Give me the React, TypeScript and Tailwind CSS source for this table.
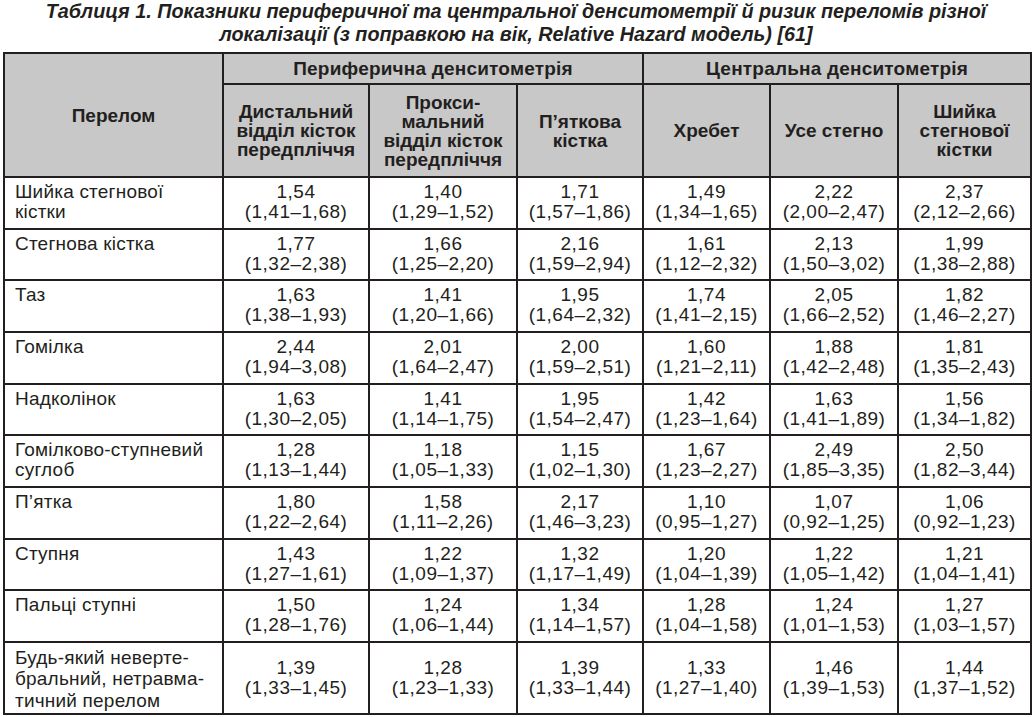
import * as React from "react";

type Row = { name: React.ReactNode; vals: [string, string][]; last?: boolean };

const rows: Row[] = [
  {
    name: (
      <>
        Шийка стегнової
        <br />
        кістки
      </>
    ),
    vals: [
      ["1,54", "(1,41–1,68)"],
      ["1,40", "(1,29–1,52)"],
      ["1,71", "(1,57–1,86)"],
      ["1,49", "(1,34–1,65)"],
      ["2,22", "(2,00–2,47)"],
      ["2,37", "(2,12–2,66)"],
    ],
  },
  {
    name: "Стегнова кістка",
    vals: [
      ["1,77", "(1,32–2,38)"],
      ["1,66", "(1,25–2,20)"],
      ["2,16", "(1,59–2,94)"],
      ["1,61", "(1,12–2,32)"],
      ["2,13", "(1,50–3,02)"],
      ["1,99", "(1,38–2,88)"],
    ],
  },
  {
    name: "Таз",
    vals: [
      ["1,63", "(1,38–1,93)"],
      ["1,41", "(1,20–1,66)"],
      ["1,95", "(1,64–2,32)"],
      ["1,74", "(1,41–2,15)"],
      ["2,05", "(1,66–2,52)"],
      ["1,82", "(1,46–2,27)"],
    ],
  },
  {
    name: "Гомілка",
    vals: [
      ["2,44", "(1,94–3,08)"],
      ["2,01", "(1,64–2,47)"],
      ["2,00", "(1,59–2,51)"],
      ["1,60", "(1,21–2,11)"],
      ["1,88", "(1,42–2,48)"],
      ["1,81", "(1,35–2,43)"],
    ],
  },
  {
    name: "Надколінок",
    vals: [
      ["1,63", "(1,30–2,05)"],
      ["1,41", "(1,14–1,75)"],
      ["1,95", "(1,54–2,47)"],
      ["1,42", "(1,23–1,64)"],
      ["1,63", "(1,41–1,89)"],
      ["1,56", "(1,34–1,82)"],
    ],
  },
  {
    name: (
      <>
        Гомілково-ступневий
        <br />
        суглоб
      </>
    ),
    vals: [
      ["1,28", "(1,13–1,44)"],
      ["1,18", "(1,05–1,33)"],
      ["1,15", "(1,02–1,30)"],
      ["1,67", "(1,23–2,27)"],
      ["2,49", "(1,85–3,35)"],
      ["2,50", "(1,82–3,44)"],
    ],
  },
  {
    name: "П’ятка",
    vals: [
      ["1,80", "(1,22–2,64)"],
      ["1,58", "(1,11–2,26)"],
      ["2,17", "(1,46–3,23)"],
      ["1,10", "(0,95–1,27)"],
      ["1,07", "(0,92–1,25)"],
      ["1,06", "(0,92–1,23)"],
    ],
  },
  {
    name: "Ступня",
    vals: [
      ["1,43", "(1,27–1,61)"],
      ["1,22", "(1,09–1,37)"],
      ["1,32", "(1,17–1,49)"],
      ["1,20", "(1,04–1,39)"],
      ["1,22", "(1,05–1,42)"],
      ["1,21", "(1,04–1,41)"],
    ],
  },
  {
    name: "Пальці ступні",
    vals: [
      ["1,50", "(1,28–1,76)"],
      ["1,24", "(1,06–1,44)"],
      ["1,34", "(1,14–1,57)"],
      ["1,28", "(1,04–1,58)"],
      ["1,24", "(1,01–1,53)"],
      ["1,27", "(1,03–1,57)"],
    ],
  },
  {
    name: (
      <>
        Будь-який неверте-
        <br />
        бральний, нетравма-
        <br />
        тичний перелом
      </>
    ),
    vals: [
      ["1,39", "(1,33–1,45)"],
      ["1,28", "(1,23–1,33)"],
      ["1,39", "(1,33–1,44)"],
      ["1,33", "(1,27–1,40)"],
      ["1,46", "(1,39–1,53)"],
      ["1,44", "(1,37–1,52)"],
    ],
    last: true,
  },
];

const cell = "border-2 border-[#231f20] p-0";
const head = "bg-[#c8c8c8] font-bold text-center align-middle leading-[19px]";

export default function App() {
  return (
    <div
      className="w-[1032px] bg-white text-[#231f20]"
      style={{ fontFamily: '"Liberation Sans", Arial, sans-serif' }}
    >
      <h1 className="text-center text-[19.8px] font-bold italic leading-[23px]">
        Таблиця 1. Показники периферичної та центральної денситометрії й ризик переломів різної
        <br />
        локалізації (з поправкою на вік, Relative Hazard модель) [61]
      </h1>
      <table className="ml-[3px] mt-[6px] w-[1027px] table-fixed border-collapse text-[19px]">
        <colgroup>
          <col className="w-[219px]" />
          <col className="w-[146px]" />
          <col className="w-[148px]" />
          <col className="w-[126px]" />
          <col className="w-[127px]" />
          <col className="w-[128px]" />
          <col className="w-[133px]" />
        </colgroup>
        <thead>
          <tr className="h-[31px]">
            <th rowSpan={2} className={`${cell} ${head}`}>
              Перелом
            </th>
            <th colSpan={3} className={`${cell} ${head} tracking-[0.2px]`}>
              Периферична денситометрія
            </th>
            <th colSpan={3} className={`${cell} ${head} tracking-[0.2px]`}>
              Центральна денситометрія
            </th>
          </tr>
          <tr className="h-[93px]">
            <th className={`${cell} ${head}`}>
              Дистальний
              <br />
              відділ кісток
              <br />
              передпліччя
            </th>
            <th className={`${cell} ${head}`}>
              Прокси-
              <br />
              мальний
              <br />
              відділ кісток
              <br />
              передпліччя
            </th>
            <th className={`${cell} ${head}`}>
              П’яткова
              <br />
              кістка
            </th>
            <th className={`${cell} ${head}`}>Хребет</th>
            <th className={`${cell} ${head}`}>Усе стегно</th>
            <th className={`${cell} ${head}`}>
              Шийка
              <br />
              стегнової
              <br />
              кістки
            </th>
          </tr>
        </thead>
        <tbody>
          {rows.map((r, i) => (
            <tr key={i} className={r.last ? "h-[72px]" : "h-[51.67px]"}>
              <td
                className={`${cell} whitespace-nowrap pl-[10px] pt-[4px] align-top tracking-[0.2px] ${r.last ? "leading-[21.5px]" : "leading-[20px]"}`}
              >
                {r.name}
              </td>
              {r.vals.map(([v, ci], j) => (
                <td
                  key={j}
                  className={`${cell} whitespace-nowrap text-center leading-[20px] tracking-[0.5px] ${r.last ? "align-middle" : "align-top pt-[4px]"}`}
                >
                  {v}
                  <br />
                  {ci}
                </td>
              ))}
            </tr>
          ))}
        </tbody>
      </table>
    </div>
  );
}
